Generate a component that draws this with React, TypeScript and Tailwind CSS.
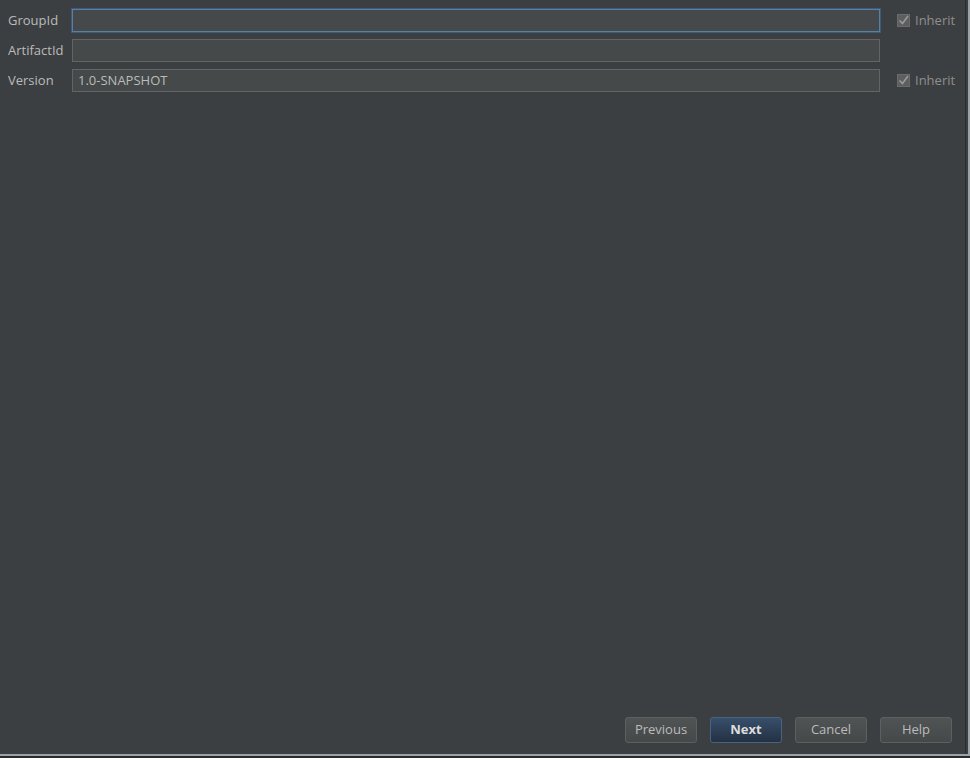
export default function App() {
  const rows = [
    { label: 'GroupId', value: '', inherit: true, focused: true },
    { label: 'ArtifactId', value: '', inherit: false, focused: false },
    { label: 'Version', value: '1.0-SNAPSHOT', inherit: true, focused: false },
  ]

  return (
    <div
      className="w-[970px] h-[758px] bg-[#3c3f41] flex flex-col text-[13px] text-[#bbbbbb] overflow-hidden"
      style={{ fontFamily: '"Segoe UI", "Open Sans", "Liberation Sans", sans-serif' }}
    >
      <div className="flex flex-1 min-h-0">
        <div className="flex-1 flex flex-col">
          <div className="flex flex-col gap-[7px] pt-[9px] pl-[8px] pr-[9px]">
            {rows.map((row) => (
              <div key={row.label} className="flex items-center h-[23px]">
                <div className="w-[64px] shrink-0">{row.label}</div>
                <div
                  className={`w-[808px] h-[23px] bg-[#45494a] border px-[5px] flex items-center ${
                    row.focused ? 'border-[#5a7fa6] shadow-[0_0_0_1px_#3d5a78]' : 'border-[#646464]'
                  }`}
                >
                  {row.value}
                </div>
                {row.inherit && (
                  <div className="flex items-center ml-[17px] gap-[5px] text-[#8e8e8e]">
                    <div className="w-[13px] h-[13px] bg-[#5c5e60] border border-[#6b6b6b] flex items-center justify-center">
                      <svg width="11" height="11" viewBox="0 0 11 11" fill="none">
                        <path d="M1.5 5.5 L4.5 8.5 L10 1" stroke="#9a9a9a" strokeWidth="1.6" />
                      </svg>
                    </div>
                    <span>Inherit</span>
                  </div>
                )}
              </div>
            ))}
          </div>
          <div className="flex-1" />
          <div className="flex justify-end gap-[13px] pr-[13px] pb-[11px]">
            {['Previous', 'Next', 'Cancel', 'Help'].map((b) => (
              <div
                key={b}
                className={`w-[72px] h-[26px] rounded-[3px] border flex items-center justify-center ${
                  b === 'Next'
                    ? 'bg-gradient-to-b from-[#384f6b] to-[#233143] border-[#4a6282] text-[#dddddd] font-bold'
                    : 'bg-gradient-to-b from-[#505354] to-[#46494a] border-[#5e6060] text-[#bbbbbb]'
                }`}
              >
                {b}
              </div>
            ))}
          </div>
        </div>
        <div className="w-[5px] flex">
          <div className="w-[1px] bg-[#2b2b2b]" />
          <div className="w-[2px] bg-[#3c3f41]" />
          <div className="w-[2px] bg-[#9aa3aa]" />
        </div>
      </div>
      <div className="h-[2px] bg-[#9aa3aa]" />
      <div className="h-[2px] bg-[#2b2b2b]" />
    </div>
  )
}
